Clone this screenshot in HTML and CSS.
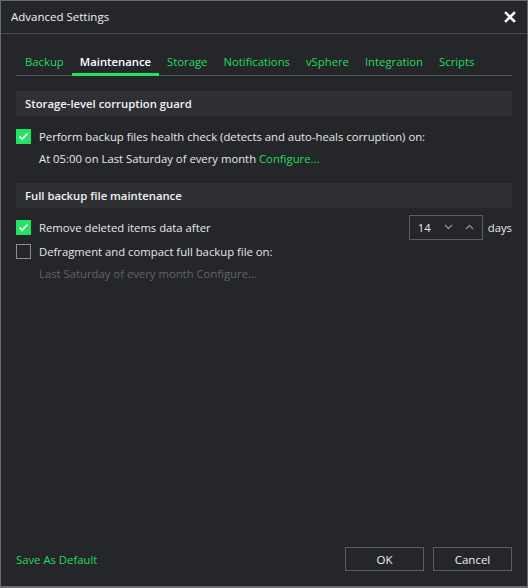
FILE: index.html
```html
<!DOCTYPE html>
<html>
<head>
<meta charset="utf-8">
<link rel="stylesheet" href="styles.css">
</head>
<body>
<div class="dialog">
  <div class="titlebar">
    <span class="title">Advanced Settings</span>
    <svg class="close" width="12" height="12" viewBox="0 0 12 12"><path d="M2 2 L10 10 M10 2 L2 10" stroke="#fff" stroke-width="2.6" stroke-linecap="square"/></svg>
  </div>
  <div class="content">
    <div class="tabs">
      <span class="tab">Backup</span>
      <span class="tab active">Maintenance</span>
      <span class="tab">Storage</span>
      <span class="tab">Notifications</span>
      <span class="tab">vSphere</span>
      <span class="tab">Integration</span>
      <span class="tab">Scripts</span>
    </div>

    <div class="section-head s1">Storage-level corruption guard</div>
    <div class="row r1">
      <span class="cb checked"><svg width="11" height="9" viewBox="0 0 11 9"><path d="M1.5 4.5 L4.2 7.2 L9.5 1.5" stroke="#fff" stroke-width="1.8" fill="none"/></svg></span>
      <span>Perform backup files health check (detects and auto-heals corruption) on:</span>
    </div>
    <div class="sub">At 05:00 on Last Saturday of every month <span class="link">Configure...</span></div>

    <div class="section-head s2">Full backup file maintenance</div>
    <div class="row r3">
      <span class="cb checked"><svg width="11" height="9" viewBox="0 0 11 9"><path d="M1.5 4.5 L4.2 7.2 L9.5 1.5" stroke="#fff" stroke-width="1.8" fill="none"/></svg></span>
      <span class="grow">Remove deleted items data after</span>
      <div class="spin">
        <span class="val">14</span>
        <svg class="arr" width="9" height="6" viewBox="0 0 9 6"><path d="M1 1 L4.5 4.5 L8 1" stroke="#8a8c91" stroke-width="1.3" fill="none"/></svg>
        <svg class="arr" width="9" height="6" viewBox="0 0 9 6"><path d="M1 5 L4.5 1.5 L8 5" stroke="#8a8c91" stroke-width="1.3" fill="none"/></svg>
      </div>
      <span class="days">days</span>
    </div>
    <div class="row r4">
      <span class="cb"></span>
      <span>Defragment and compact full backup file on:</span>
    </div>
    <div class="sub dim">Last Saturday of every month Configure...</div>

    <div class="spacer"></div>
    <div class="footer">
      <span class="link">Save As Default</span>
      <div class="buttons">
        <button class="btn">OK</button>
        <button class="btn">Cancel</button>
      </div>
    </div>
  </div>
</div>
</body>
</html>
```

FILE: styles.css
```css
* { box-sizing: border-box; }
html, body { margin: 0; padding: 0; background: #25262a; }
body {
  font-family: "Open Sans", "Noto Sans", sans-serif;
  font-size: 11.3px;
  color: #e8e8e8;
}
.dialog {
  width: 528px;
  height: 588px;
  border: 1px solid #6a6b6f;
  border-bottom-width: 2px;
  background: #25262a;
  display: flex;
  flex-direction: column;
}
.titlebar {
  height: 33px;
  border-bottom: 1px solid #47494e;
  display: flex;
  align-items: center;
  justify-content: space-between;
  padding: 0 11px 1px 10px;
  flex: none;
}
.title { font-size: 11.5px; color: #f0f0f0; }
.content {
  flex: 1;
  display: flex;
  flex-direction: column;
  padding: 0 15px 15px 15px;
}
.tabs {
  margin-top: 16px;
  display: flex;
  border-bottom: 1px solid #54565b;
  height: 26px;
  padding-left: 1px;
}
.tab {
  padding: 0 8px;
  color: #22dd5f;
  line-height: 24px;
  height: 26px;
  margin-bottom: -1px;
  border-bottom: 3px solid transparent;
}
.tab.active {
  color: #ffffff;
  font-weight: 600;
  border-bottom-color: #22e463;
}
.section-head {
  background: #2f3034;
  height: 25px;
  line-height: 25px;
  padding-left: 9px;
  font-weight: 600;
  color: #f2f2f2;
}
.s1 { margin-top: 15px; }
.s2 { margin-top: 13px; }
.row {
  display: flex;
  align-items: center;
  height: 24px;
}
.r1 { margin-top: 8px; }
.r3 { margin-top: 7px; }
.r4 { margin-top: 0; }
.cb {
  width: 15px;
  height: 15px;
  border: 1px solid #8b8d92;
  margin: 0 8px 0 0;
  display: flex;
  align-items: center;
  justify-content: center;
  flex: none;
}
.cb.checked {
  background: #22e463;
  border-color: #22e463;
}
.grow { flex: 1; }
.sub {
  padding-left: 23px;
  height: 22px;
  line-height: 22px;
}
.dim { color: #62646a; }
.link { color: #22dd5f; }
.spin {
  width: 74px;
  height: 25px;
  border: 1px solid #5b5d62;
  display: flex;
  align-items: center;
  padding-left: 8px;
}
.spin .val { flex: 1; }
.spin .arr { margin-right: 12px; }
.spin .arr + .arr { margin-right: 8px; }
.days { margin-left: 5px; }
.spacer { flex: 1; }
.footer {
  display: flex;
  align-items: center;
  justify-content: space-between;
}
.buttons { display: flex; gap: 9px; }
.btn {
  width: 79px;
  height: 24px;
  background: transparent;
  border: 1px solid #5b5d62;
  color: #f0f0f0;
  font-family: inherit;
  font-size: 11.5px;
  padding: 0;
}
```
